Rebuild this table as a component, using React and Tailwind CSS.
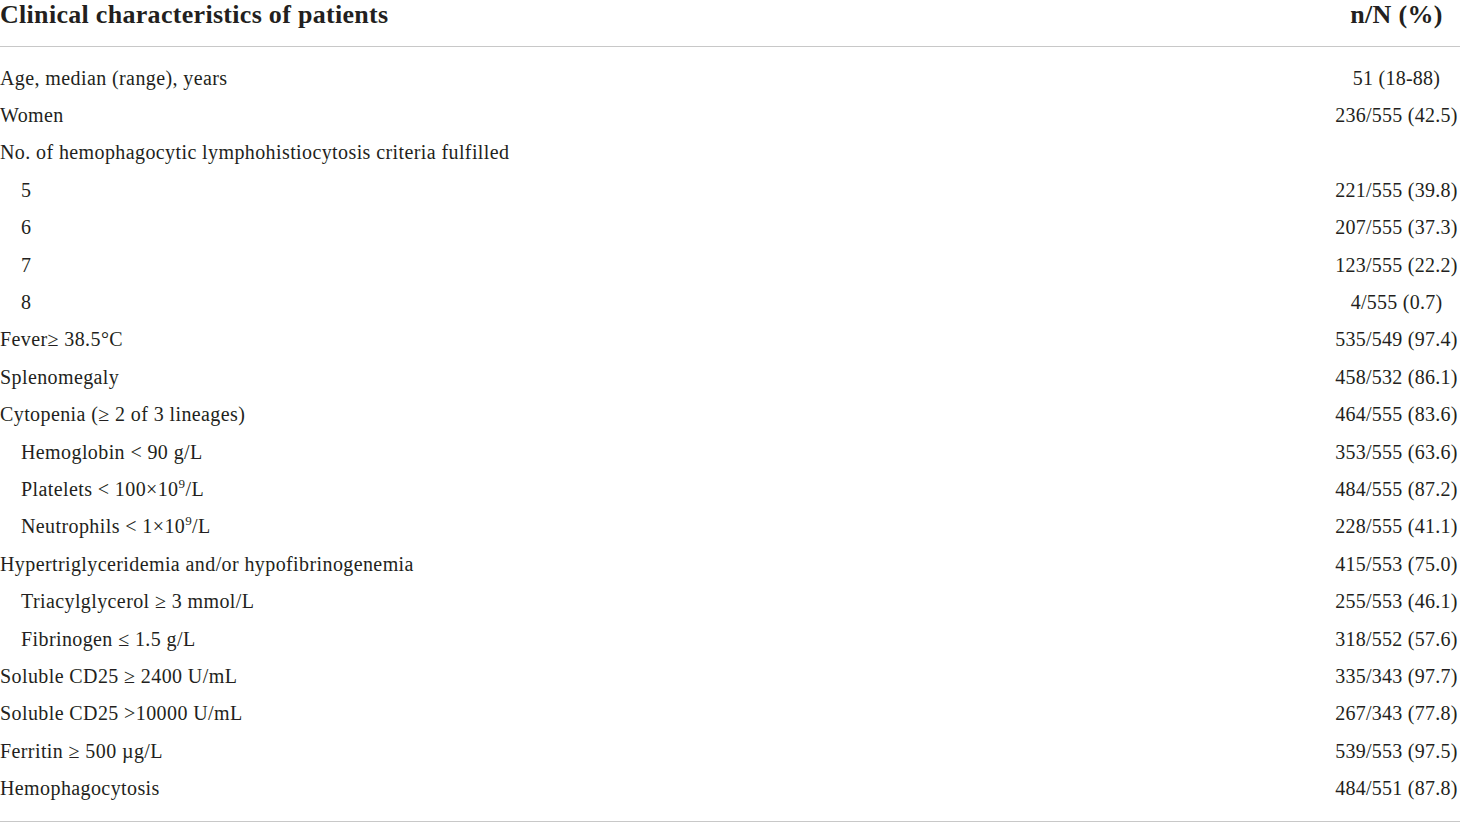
const SUP = 'text-[13px] relative -top-[8px]';

const ROWS = [
  { label: 'Age, median (range), years', value: '51 (18-88)' },
  { label: 'Women', value: '236/555 (42.5)' },
  { label: 'No. of hemophagocytic lymphohistiocytosis criteria fulfilled', value: '' },
  { label: '5', value: '221/555 (39.8)', sub: true },
  { label: '6', value: '207/555 (37.3)', sub: true },
  { label: '7', value: '123/555 (22.2)', sub: true },
  { label: '8', value: '4/555 (0.7)', sub: true },
  { label: 'Fever\u2265 38.5°C', value: '535/549 (97.4)' },
  { label: 'Splenomegaly', value: '458/532 (86.1)' },
  { label: 'Cytopenia (\u2265 2 of 3 lineages)', value: '464/555 (83.6)' },
  { label: 'Hemoglobin < 90 g/L', value: '353/555 (63.6)', sub: true },
  { label: <>Platelets &lt; 100×10<sup className={SUP}>9</sup>/L</>, value: '484/555 (87.2)', sub: true },
  { label: <>Neutrophils &lt; 1×10<sup className={SUP}>9</sup>/L</>, value: '228/555 (41.1)', sub: true },
  { label: 'Hypertriglyceridemia and/or hypofibrinogenemia', value: '415/553 (75.0)' },
  { label: 'Triacylglycerol \u2265 3 mmol/L', value: '255/553 (46.1)', sub: true },
  { label: 'Fibrinogen \u2264 1.5 g/L', value: '318/552 (57.6)', sub: true },
  { label: 'Soluble CD25 \u2265 2400 U/mL', value: '335/343 (97.7)' },
  { label: 'Soluble CD25 >10000 U/mL', value: '267/343 (77.8)' },
  { label: 'Ferritin \u2265 500 \u00b5g/L', value: '539/553 (97.5)' },
  { label: 'Hemophagocytosis', value: '484/551 (87.8)' },
];

export default function App() {
  return (
    <div className="w-[1460px] h-[823px] bg-white text-[#231f20] font-['Liberation_Serif',serif]">
      {/* Header */}
      <div className="flex h-[47px] border-b-[1.5px] border-[#c8c8c8] text-[26px] leading-[30px] font-bold tracking-[0.3px]">
        <div className="flex-1">Clinical characteristics of patients</div>
        <div className="w-[127px] text-center">n/N (%)</div>
      </div>

      {/* Body */}
      <div className="pt-[12px] pb-[14px] border-b-[1.5px] border-[#c8c8c8]">
        {ROWS.map((row, i) => (
          <div key={i} className="flex items-center h-[37.4px] text-[20px]">
            <div className={row.sub ? 'flex-1 pl-[21px] tracking-[0.4px]' : 'flex-1 tracking-[0.4px]'}>{row.label}</div>
            <div className="w-[127px] text-center tracking-[0.25px]">{row.value}</div>
          </div>
        ))}
      </div>
    </div>
  );
}
